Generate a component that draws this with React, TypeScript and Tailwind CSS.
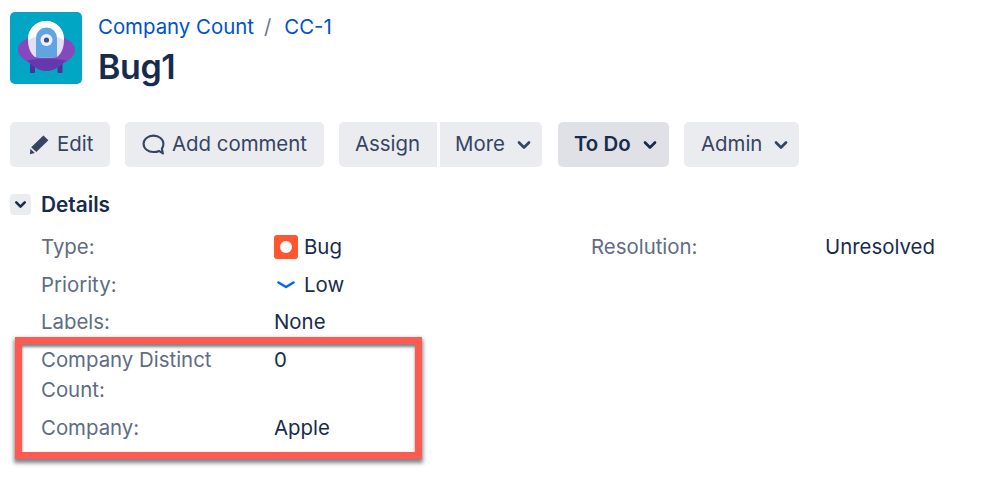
import React from 'react';
import { ChevronDown } from 'lucide-react';

const ProjectAvatar = () => (
  <svg width="72" height="72" viewBox="0 0 72 72" className="shrink-0">
    <rect width="72" height="72" rx="5" fill="#00A6C4" />
    <rect x="20" y="50" width="5" height="11" rx="1" fill="#4E2F9E" />
    <rect x="47.5" y="50" width="5" height="11" rx="1" fill="#4E2F9E" />
    <path d="M8 38 C8 29 20 23 36.5 23 C53 23 65 29 65 38 C65 44 58 49 52 52 C46 57 42 59 36.5 59 C31 59 27 57 21 52 C15 49 8 44 8 38 Z" fill="#8549BD" />
    <path d="M17 48.5 C25 46 48 46 56 48.5 C54.5 50 53 51 52 52 C46 57 42 59 36.5 59 C31 59 27 57 21 52 C20 51 18.5 50 17 48.5 Z" fill="#6538AE" />
    <path d="M18 27 A18 18 0 0 1 54 27 C54 35 52 41 47 45 C40 46 32 46 25 45 C20 41 18 35 18 27 Z" fill="#E6DFF3" />
    <path d="M18 27 A18 18 0 0 1 54 27 L54 28 C44 22 28 22 18 28 Z" fill="#FFFFFF" />
    <path d="M26 45 L26 26 A10.5 10.5 0 0 1 47 26 L47 45 C40 46 33 46 26 45 Z" fill="#5FA6E0" />
    <circle cx="36.5" cy="28" r="6" fill="#F1EDF8" />
    <circle cx="36.5" cy="28" r="2.6" fill="#3D4E8A" />
  </svg>
);

const PencilIcon = () => (
  <svg width="21" height="21" viewBox="0 0 21 21" fill="#344563">
    <path d="M14.4 1.6 L19.4 6.3 L7.3 18 L2.2 13.3 Z" />
    <path d="M1.4 14.8 L5.8 19 L0.9 20.2 Z" />
  </svg>
);

const CommentIcon = () => (
  <svg width="23" height="23" viewBox="0 0 22 22" fill="none" stroke="#344563" strokeWidth="2" strokeLinejoin="round">
    <path d="M11 2.5 C5.8 2.5 1.5 5.8 1.5 10.4 C1.5 15 5.8 18.2 11 18.2 C13 18.2 14.8 18 16.2 17.2 L20 19.6 L19 15 C20 13.6 20.5 12 20.5 10.4 C20.5 5.8 16.2 2.5 11 2.5 Z" />
  </svg>
);

const BugIcon = () => (
  <span className="w-6 h-6 rounded-[3px] bg-[#FF5630] flex items-center justify-center shrink-0">
    <span className="w-3 h-3 rounded-full bg-white" />
  </span>
);

const LowIcon = () => (
  <svg width="24" height="24" viewBox="0 0 24 24" fill="none" className="shrink-0">
    <path d="M4.5 9.5 L12 14 L19.5 9.5" stroke="#0065FF" strokeWidth="2.6" strokeLinecap="round" strokeLinejoin="round" />
  </svg>
);

const ActionButton = ({ width, className = '', children }: { width: string; className?: string; children: React.ReactNode }) => (
  <div className={`h-[45px] bg-[#EBECF0] flex items-center text-[#344563] ${width} ${className}`}>
    {children}
  </div>
);

const Row = ({ label, height, children }: { label: React.ReactNode; height: string; children: React.ReactNode }) => (
  <div className={`flex items-start ${height}`}>
    <div className="w-[233px] shrink-0 text-[#5E6C84] leading-[30px]">{label}</div>
    <div className="flex items-center gap-[6px] text-[#172B4D] leading-[30px] h-[30px]">{children}</div>
  </div>
);

export default function App() {
  return (
    <div className="relative w-[998px] h-[490px] overflow-hidden bg-white text-[20.4px] font-['Inter','Noto_Sans',sans-serif]">
      <div className="flex flex-col pl-[10px] pt-3">
        {/* Header */}
        <div className="flex items-start gap-4">
          <ProjectAvatar />
          <div className="flex flex-col">
            <div className="flex items-center h-[30px] text-[#0052CC]">
              <span>Company Count</span>
              <span className="text-[#6B778C] ml-[10px] mr-[13px]">/</span>
              <span>CC-1</span>
            </div>
            <h1 className="text-[34px] leading-[50px] font-semibold text-[#172B4D] tracking-[-0.4px]">Bug1</h1>
          </div>
        </div>

        {/* Toolbar */}
        <div className="flex items-center mt-[30px]">
          <ActionButton width="w-[100px]" className="rounded-[5px] pl-[19px] gap-[7px] mr-[15px]">
            <PencilIcon />
            <span>Edit</span>
          </ActionButton>
          <ActionButton width="w-[199px]" className="rounded-[5px] pl-[17px] gap-[7px] mr-[15px]">
            <CommentIcon />
            <span>Add comment</span>
          </ActionButton>
          <ActionButton width="w-[98px]" className="rounded-l-[5px] pl-[16px] mr-[3px]">
            <span>Assign</span>
          </ActionButton>
          <ActionButton width="w-[102px]" className="rounded-r-[5px] pl-[15px] gap-[9px] mr-[16px]">
            <span>More</span>
            <ChevronDown size={20} strokeWidth={3.2} />
          </ActionButton>
          <ActionButton width="w-[111px]" className="rounded-[5px] pl-[16px] gap-[9px] mr-[15px] !bg-[#DFE1E6] !text-[#172B4D] font-semibold">
            <span>To Do</span>
            <ChevronDown size={20} strokeWidth={3.2} />
          </ActionButton>
          <ActionButton width="w-[115px]" className="rounded-[5px] pl-[17px] gap-[9px]">
            <span>Admin</span>
            <ChevronDown size={20} strokeWidth={3.2} />
          </ActionButton>
        </div>

        {/* Details */}
        <div className="flex items-center gap-[10px] mt-[27px] h-[21px]">
          <span className="w-[21px] h-[21px] rounded-[4px] bg-[#EBECF0] flex items-center justify-center text-[#172B4D]">
            <ChevronDown size={17} strokeWidth={3.6} />
          </span>
          <span className="font-semibold text-[20.8px] text-[#172B4D]">Details</span>
        </div>

        <div className="flex mt-[17px] pl-[31px]">
          <div className="w-[550px] shrink-0 flex flex-col">
            <Row label="Type:" height="h-[38px]">
              <BugIcon />
              <span>Bug</span>
            </Row>
            <Row label="Priority:" height="h-[37px]">
              <LowIcon />
              <span>Low</span>
            </Row>
            <Row label="Labels:" height="h-[38px]">
              <span>None</span>
            </Row>
            <Row label={<>Company Distinct<br />Count:</>} height="h-[68px]">
              <span>0</span>
            </Row>
            <Row label="Company:" height="h-[30px]">
              <span>Apple</span>
            </Row>
          </div>
          <div className="flex items-start h-[30px] leading-[30px]">
            <div className="w-[234px] text-[#5E6C84]">Resolution:</div>
            <div className="text-[#172B4D]">Unresolved</div>
          </div>
        </div>
      </div>

      {/* Annotation box */}
      <div className="absolute left-[15px] top-[337px] w-[407px] h-[122px] border-[7px] border-[#FF5A4F] shadow-[0_3px_4px_1px_rgba(40,50,60,0.6),inset_0_3px_3px_rgba(40,50,60,0.6)]" />
    </div>
  );
}
